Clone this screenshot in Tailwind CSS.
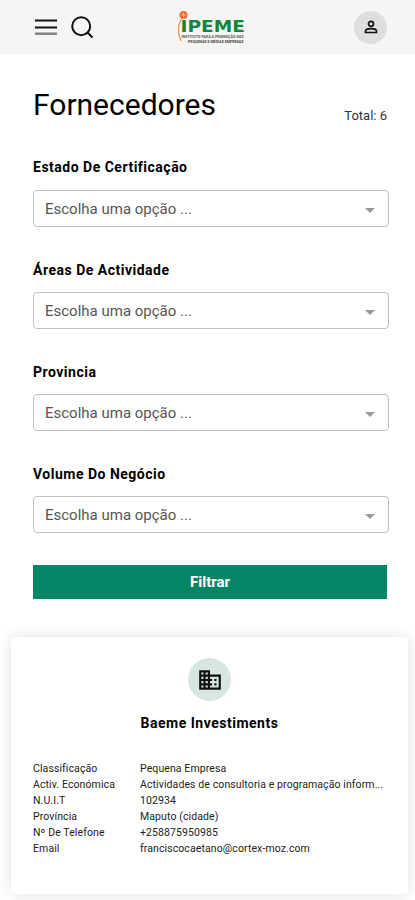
<!DOCTYPE html>
<html lang="pt">
<head>
    <meta charset="UTF-8">
    <meta name="viewport" content="width=device-width, initial-scale=1.0">
    <title>IPEME - Fornecedores</title>
    <script src="https://cdn.jsdelivr.net/npm/@tailwindcss/browser@4"></script>
</head>
<body class="h-[900px] overflow-hidden bg-white font-['Roboto',sans-serif] text-black">
    <header class="flex h-[54px] items-center justify-between bg-[#f6f5f3] pl-[35px] pr-7">
        <div class="flex w-[62px] items-center gap-[14px]">
            <button aria-label="Menu">
                <svg class="block h-4 w-[22px]" viewBox="0 0 22 16">
                    <path d="M0 1.500h22M0 8.500h22" stroke="#111" stroke-width="2"/>
                    <path d="M0 14.700h22" stroke="#888" stroke-width="2.600"/>
                </svg>
            </button>
            <button aria-label="Pesquisar">
                <svg class="block h-[23px] w-[23px]" viewBox="0 0 23 23" fill="none" stroke="#111" stroke-width="2">
                    <circle cx="10.200" cy="10.200" r="9"/>
                    <path d="M16 16l5.500 5.500"/>
                </svg>
            </button>
        </div>
        <svg class="ml-6 h-[38px] w-[70px] overflow-visible" viewBox="0 0 70 38" font-family="Roboto, sans-serif">
            <path d="M3.500 11C-.5 17 -.2 25 3 33" fill="none" stroke="#f0823c" stroke-width="1.100"/>
            <circle cx="5.500" cy="7" r="4" fill="#f26a2a"/>
            <path d="M5.500 4.500v5M3 7h5" stroke="#fbc39c" stroke-width="1"/>
            <text x="2.500" y="24" font-family="DejaVu Sans, sans-serif" font-size="15" font-weight="bold" fill="#16833c" textLength="64.500" lengthAdjust="spacingAndGlyphs">IPEME</text>
            <text x="3.500" y="29.800" font-size="3.600" font-weight="bold" fill="#555" textLength="62" lengthAdjust="spacingAndGlyphs">INSTITUTO PARA A PROMOÇÃO DAS</text>
            <text x="10" y="34.600" font-size="3.600" font-weight="bold" fill="#444" textLength="55.500" lengthAdjust="spacingAndGlyphs">PEQUENAS E MÉDIAS EMPRESAS</text>
        </svg>
        <button class="ml-[49px] flex h-[33px] w-[33px] items-center justify-center rounded-full bg-[#dededd]" aria-label="Conta">
            <svg class="h-4 w-4" viewBox="0 0 16 16" fill="none" stroke="#111" stroke-width="1.700">
                <circle cx="8" cy="4.800" r="2.500"/>
                <path d="M2.500 13.500v-1.300c0-1.500 2.500-2.500 5.500-2.500s5.500 1 5.500 2.500v1.300z"/>
            </svg>
        </button>
    </header>

    <main>
        <div class="pr-7 pl-[33px]">
            <div class="flex h-[101px] items-start justify-between pt-8">
                <h1 class="text-[30px] leading-[38px]">Fornecedores</h1>
                <span class="mt-[22px] text-[13px] leading-4 text-[#333]">Total: 6</span>
            </div>

            <form>
                <div class="h-[102px]">
                    <label class="block pt-[3px] text-sm leading-[18px] font-bold tracking-[0.5px]">Estado De Certificação</label>
                    <div class="mt-3.5 -mr-[1.500px] flex h-[37px] items-center justify-between rounded-[4px] border border-[#bfbfbf] pt-px pr-[13px] pl-[11px] text-[15px] text-[#555]">
                        <span>Escolha uma opção ...</span>
                        <svg class="mt-0.5 h-[5px] w-2.5" viewBox="0 0 10 5"><path d="M0 0h10L5 5z" fill="#999"/></svg>
                    </div>
                </div>
                <div class="h-[102px]">
                    <label class="block pt-1 text-sm leading-[18px] font-bold tracking-[0.5px]">Áreas De Actividade</label>
                    <div class="mt-[13px] -mr-[1.500px] flex h-[37px] items-center justify-between rounded-[4px] border border-[#bfbfbf] pt-px pr-[13px] pl-[11px] text-[15px] text-[#555]">
                        <span>Escolha uma opção ...</span>
                        <svg class="mt-0.5 h-[5px] w-2.5" viewBox="0 0 10 5"><path d="M0 0h10L5 5z" fill="#999"/></svg>
                    </div>
                </div>
                <div class="h-[102px]">
                    <label class="block pt-1 text-sm leading-[18px] font-bold tracking-[0.5px]">Provincia</label>
                    <div class="mt-[13px] -mr-[1.500px] flex h-[37px] items-center justify-between rounded-[4px] border border-[#bfbfbf] pt-px pr-[13px] pl-[11px] text-[15px] text-[#555]">
                        <span>Escolha uma opção ...</span>
                        <svg class="mt-0.5 h-[5px] w-2.5" viewBox="0 0 10 5"><path d="M0 0h10L5 5z" fill="#999"/></svg>
                    </div>
                </div>
                <div class="h-[104px]">
                    <label class="block pt-1 text-sm leading-[18px] font-bold tracking-[0.5px]">Volume Do Negócio</label>
                    <div class="mt-[13px] -mr-[1.500px] flex h-[37px] items-center justify-between rounded-[4px] border border-[#bfbfbf] pt-px pr-[13px] pl-[11px] text-[15px] text-[#555]">
                        <span>Escolha uma opção ...</span>
                        <svg class="mt-0.5 h-[5px] w-2.5" viewBox="0 0 10 5"><path d="M0 0h10L5 5z" fill="#999"/></svg>
                    </div>
                </div>
                <button type="button" class="block h-[34px] w-full bg-[#068466] text-[15px] font-bold text-white">Filtrar</button>
            </form>
        </div>

        <section class="mt-[38px] mr-[7px] ml-[11px] h-[257px] rounded-[3px] bg-white pt-[21px] shadow-[0_0_16px_rgba(0,0,0,0.12)]">
            <div class="mx-auto flex h-[43px] w-[43px] items-center justify-center rounded-full bg-[#d7e6e0]">
                <svg class="h-[26px] w-[26px]" viewBox="0 0 24 24" fill="#111">
                    <path d="M12 7V3H2v18h20V7H12zM6 19H4v-2h2v2zm0-4H4v-2h2v2zm0-4H4V9h2v2zm0-4H4V5h2v2zm4 12H8v-2h2v2zm0-4H8v-2h2v2zm0-4H8V9h2v2zm0-4H8V5h2v2zm10 12h-8v-2h2v-2h-2v-2h2v-2h-2V9h8v10zm-2-8h-2v2h2v-2zm0 4h-2v2h2v-2z"/>
                </svg>
            </div>
            <h2 class="mt-3 text-center text-sm leading-5 font-bold tracking-[0.500px]">Baeme Investiments</h2>
            <dl class="mt-7 grid grid-cols-[107px_245px] pl-[22px] text-[10.500px] leading-4 tracking-[0.100px] text-[#222]">
                <dt>Classificação</dt>
                <dd>Pequena Empresa</dd>
                <dt>Activ. Económica</dt>
                <dd class="whitespace-nowrap">Actividades de consultoria e programação inform...</dd>
                <dt>N.U.I.T</dt>
                <dd>102934</dd>
                <dt>Província</dt>
                <dd>Maputo (cidade)</dd>
                <dt>Nº De Telefone</dt>
                <dd>+258875950985</dd>
                <dt>Email</dt>
                <dd>franciscocaetano@cortex-moz.com</dd>
            </dl>
        </section>
    </main>
</body>
</html>
